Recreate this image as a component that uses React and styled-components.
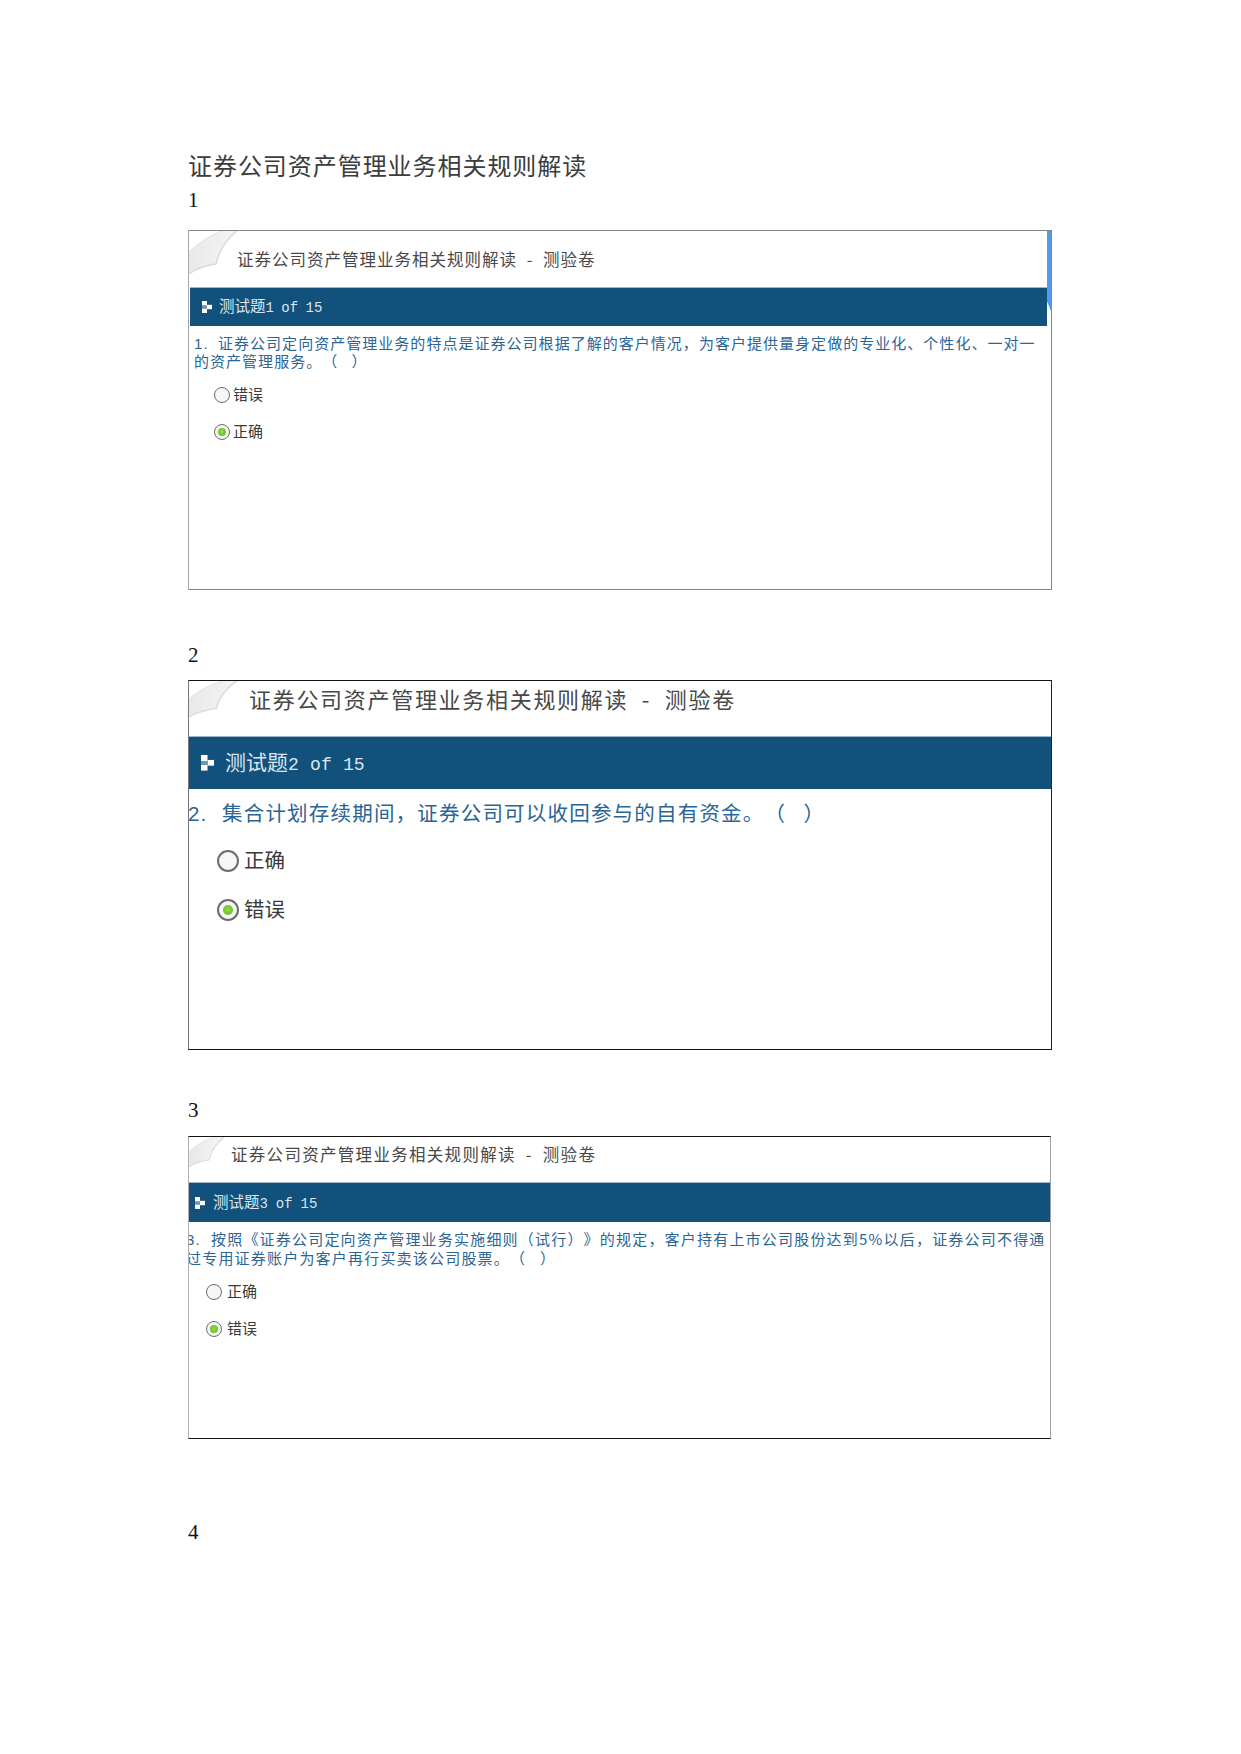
import React from 'react';
import styled, { createGlobalStyle } from 'styled-components';

const CJK = '"Noto Sans CJK SC", "Liberation Sans", sans-serif';

const GlobalStyle = createGlobalStyle`
  html, body {
    margin: 0;
    padding: 0;
    background: #fff;
  }
`;

const Page = styled.div`
  box-sizing: border-box;
  width: 1241px;
  min-height: 1754px;
  padding: 150px 0 0 188px;
`;

const DocTitle = styled.div`
  font-family: ${CJK};
  font-size: 24px;
  letter-spacing: 0.95px;
  line-height: 30px;
  color: #3c3c3c;
  white-space: nowrap;
`;

const SectionNumber = styled.div`
  font-family: "Liberation Serif", serif;
  font-size: 21px;
  line-height: 28px;
  color: #111;
  margin-top: ${p => p.$before}px;
  margin-bottom: ${p => p.$after}px;
`;

const Card = styled.div`
  position: relative;
  box-sizing: border-box;
  width: ${p => p.$m.width}px;
  height: ${p => p.$m.height}px;
  border: 1px solid ${p => p.$m.edge};
  border-left-color: ${p => p.$m.left};
  border-right-color: ${p => p.$m.right};
  overflow: hidden;
  background: #fff;
`;

const Accent = styled.div`
  position: absolute;
  top: 0;
  right: 0;
  width: 4px;
  height: 80px;
  background: #5599ea;
  clip-path: polygon(0 0, 100% 0, 100% 100%, 0 88%);
`;

const Curl = styled.svg`
  position: absolute;
  top: 0;
  left: 0;
`;

const Header = styled.div`
  display: flex;
  align-items: center;
  box-sizing: border-box;
  height: ${p => p.$m.headerH}px;
  padding-left: ${p => p.$m.headerPad}px;
  padding-bottom: ${p => p.$m.headerLift}px;
`;

const HeaderTitle = styled.span`
  position: relative;
  font-family: ${CJK};
  font-size: ${p => p.$m.titleSize}px;
  letter-spacing: ${p => p.$m.titleTrack}px;
  word-spacing: ${p => p.$m.titleWord}px;
  color: #484848;
  white-space: nowrap;
`;

const Bar = styled.div`
  display: flex;
  align-items: center;
  gap: ${p => p.$m.barGap}px;
  box-sizing: border-box;
  height: ${p => p.$m.barH}px;
  margin: 0 ${p => p.$m.barRight}px 0 ${p => p.$m.barLeft}px;
  padding-left: ${p => p.$m.barPad}px;
  background: #12517c;
  border-top: 1px solid #9db8cc;
  color: #dbe5ee;
  white-space: nowrap;
`;

const BarText = styled.span`
  margin-bottom: 4px;
`;

const BarLead = styled.span`
  font-family: ${CJK};
  font-size: ${p => p.$m.barSize}px;
`;

const BarCount = styled.span`
  font-family: "Liberation Mono", monospace;
  font-size: ${p => p.$m.countSize}px;
  word-spacing: ${p => p.$m.countWord}px;
`;

const Question = styled.div`
  padding-top: 8px;
  padding-left: ${p => p.$m.questionPad}px;
  font-family: ${CJK};
  font-size: ${p => p.$m.questionSize}px;
  letter-spacing: ${p => p.$m.questionTrack}px;
  color: #2a6596;
  white-space: pre;
  text-spacing-trim: space-all;
`;

const QuestionLine = styled.div`
  height: ${p => p.$m.questionLine}px;
  line-height: ${p => p.$m.questionLine}px;
  margin-left: ${p => p.$m.questionShift}px;
`;

const QuestionNo = styled.span`
  display: inline-block;
  width: ${p => p.$m.noWidth}px;
  line-height: 1;
  font-family: "Liberation Sans", sans-serif;
`;

const Options = styled.div`
  display: flex;
  flex-direction: column;
  gap: ${p => p.$m.optionGap}px;
  margin-top: ${p => p.$m.optionTop}px;
  padding-left: ${p => p.$m.optionPad}px;
`;

const Option = styled.div`
  display: flex;
  align-items: center;
  gap: ${p => p.$m.radioGap}px;
  height: ${p => p.$m.optionH}px;
`;

const Radio = styled.span`
  position: relative;
  flex: none;
  box-sizing: border-box;
  width: ${p => p.$m.radio}px;
  height: ${p => p.$m.radio}px;
  border: ${p => p.$m.radioLine}px solid #6c6c6c;
  border-radius: 50%;
  background: #f6f6f6;

  &::after {
    content: '';
    display: ${p => (p.$checked ? 'block' : 'none')};
    position: absolute;
    inset: 22%;
    border-radius: 50%;
    background: radial-gradient(circle at 50% 45%, #8fdc45, #5cb52a);
  }
`;

const OptionLabel = styled.span`
  margin-bottom: ${p => p.$m.labelLift}px;
  font-family: ${CJK};
  font-size: ${p => p.$m.labelSize}px;
  color: #3a3a3a;
  white-space: nowrap;
`;

const Marker = ({ size }) => (
  <svg width={size} height={size * 1.2} viewBox="0 0 10 12">
    <rect x="0" y="0" width="5" height="4.6" fill="#fff" />
    <rect x="5" y="3.8" width="5" height="4.4" fill="#fff" />
    <rect x="0" y="7.4" width="5" height="4.6" fill="#fff" />
    <rect x="0" y="4.6" width="5" height="2.8" fill="#6f97b5" />
  </svg>
);

const PageCurl = ({ w, h, id }) => (
  <Curl width={w} height={h} viewBox="0 0 50 43" preserveAspectRatio="none">
    <defs>
      <linearGradient id={id} x1="0" y1="0" x2="1" y2="0">
        <stop offset="0" stopColor="#e8e8e8" />
        <stop offset="1" stopColor="#f6f6f6" />
      </linearGradient>
    </defs>
    <path d="M0 21 C10 11 22 4 33 0 L50 0 C40 8 30 20 27 33 C18 36 8 38 0 43 Z" fill={`url(#${id})`} />
    <path d="M0 43 C8 37 18 34 27 33 C30 20 38 8 47 0" fill="none" stroke="#dcdcdc" strokeWidth="1.6" />
    <path d="M0 21 C10 11 22 4 33 0" fill="none" stroke="#e2e2e2" strokeWidth="1" />
  </Curl>
);

const HEADING = '证券公司资产管理业务相关规则解读 - 测验卷';

const cards = [
  {
    id: 'curl1',
    no: 1,
    before: 6,
    after: 16,
    lines: [
      '证券公司定向资产管理业务的特点是证券公司根据了解的客户情况，为客户提供量身定做的专业化、个性化、一对一',
      '的资产管理服务。（   ）',
    ],
    options: [['错误', false], ['正确', true]],
    accent: true,
    m: {
      width: 864, height: 360, edge: '#858585', left: '#a8a8a8', right: '#858585',
      curlW: 50, curlH: 43,
      headerH: 56, headerPad: 48, headerLift: 0, titleSize: 16.5, titleTrack: 1, titleWord: 5,
      barH: 39, barLeft: 1, barRight: 4, barPad: 12, barGap: 7, barSize: 15.5, countSize: 14, countWord: -1, marker: 10,
      questionPad: 5, questionShift: 0, questionSize: 15, questionLine: 18, questionTrack: 1.03, noWidth: 24,
      optionTop: 15, optionGap: 17, optionH: 20, optionPad: 25,
      radio: 16, radioLine: 1.5, radioGap: 3, labelSize: 15, labelLift: 4,
    },
  },
  {
    id: 'curl2',
    no: 2,
    before: 51,
    after: 11,
    lines: ['集合计划存续期间，证券公司可以收回参与的自有资金。（   ）'],
    options: [['正确', false], ['错误', true]],
    m: {
      width: 864, height: 370, edge: '#111', left: '#777', right: '#222',
      curlW: 50, curlH: 36,
      headerH: 55, headerPad: 60, headerLift: 22, titleSize: 22, titleTrack: 1.7, titleWord: 7,
      barH: 53, barLeft: 0, barRight: 0, barPad: 12, barGap: 11, barSize: 21, countSize: 18, countWord: 0.5, marker: 13,
      questionPad: 0, questionShift: -1, questionSize: 20.5, questionLine: 30, questionTrack: 1.2, noWidth: 34,
      optionTop: 21, optionGap: 23, optionH: 26, optionPad: 28,
      radio: 22, radioLine: 2, radioGap: 5, labelSize: 20.5, labelLift: 4,
    },
  },
  {
    id: 'curl3',
    no: 3,
    before: 46,
    after: 12,
    lines: [
      '按照《证券公司定向资产管理业务实施细则（试行）》的规定，客户持有上市公司股份达到5%以后，证券公司不得通',
      '过专用证券账户为客户再行买卖该公司股票。（   ）',
    ],
    options: [['正确', false], ['错误', true]],
    m: {
      width: 863, height: 303, edge: '#111', left: '#b0b0b0', right: '#a0a0a0',
      curlW: 37, curlH: 30,
      headerH: 45, headerPad: 42, headerLift: 12, titleSize: 16.5, titleTrack: 1.3, titleWord: 5,
      barH: 40, barLeft: 0, barRight: 0, barPad: 6, barGap: 8, barSize: 15.5, countSize: 14, countWord: -0.5, marker: 10,
      questionPad: 0, questionShift: -3, questionSize: 15, questionLine: 18.5, questionTrack: 1.2, noWidth: 25,
      optionTop: 15, optionGap: 17, optionH: 20, optionPad: 17,
      radio: 16, radioLine: 1.5, radioGap: 5, labelSize: 15, labelLift: 4,
    },
  },
];

const QuizCard = ({ card }) => {
  const { m, no, lines, options, accent, id } = card;
  return (
    <Card $m={m}>
      <PageCurl w={m.curlW} h={m.curlH} id={id} />
      {accent ? <Accent /> : null}
      <Header $m={m}>
        <HeaderTitle $m={m}>{HEADING}</HeaderTitle>
      </Header>
      <Bar $m={m}>
        <Marker size={m.marker} />
        <BarText>
          <BarLead $m={m}>测试题</BarLead>
          <BarCount $m={m}>{no} of 15</BarCount>
        </BarText>
      </Bar>
      <Question $m={m}>
        {lines.map((line, idx) => (
          <QuestionLine $m={m} key={line}>
            {idx === 0 ? <QuestionNo $m={m}>{no}.</QuestionNo> : null}
            {line}
          </QuestionLine>
        ))}
      </Question>
      <Options $m={m}>
        {options.map(([label, checked]) => (
          <Option $m={m} key={label}>
            <Radio $m={m} $checked={checked} />
            <OptionLabel $m={m}>{label}</OptionLabel>
          </Option>
        ))}
      </Options>
    </Card>
  );
};

const App = () => (
  <Page>
    <GlobalStyle />
    <DocTitle>证券公司资产管理业务相关规则解读</DocTitle>
    {cards.map(card => (
      <section key={card.id}>
        <SectionNumber $before={card.before} $after={card.after}>{card.no}</SectionNumber>
        <QuizCard card={card} />
      </section>
    ))}
    <SectionNumber $before={79} $after={0}>4</SectionNumber>
  </Page>
);

export default App;
